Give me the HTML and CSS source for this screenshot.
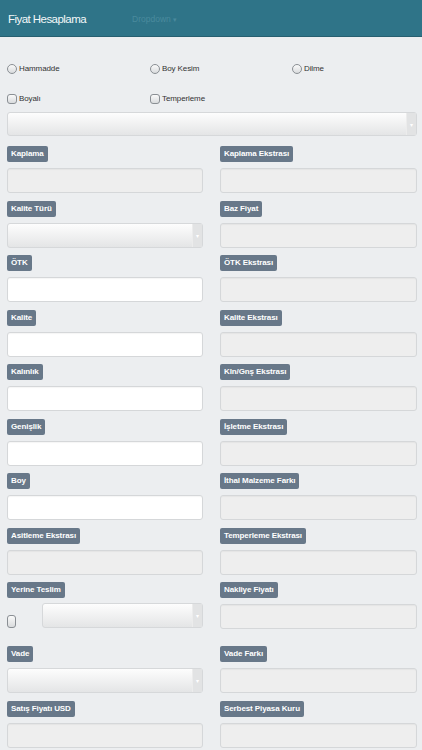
FILE: index.html
```html
<!DOCTYPE html>
<html lang="tr">
<head>
<meta charset="utf-8">
<title>Fiyat Hesaplama</title>
<link rel="stylesheet" href="styles.css">
</head>
<body>
<header class="topbar">
  <span class="brand">Fiyat Hesaplama</span>
  <span class="dropdown">Dropdown <span class="caret">▾</span></span>
</header>
<main class="page">
  <div class="options">
    <label class="opt"><span class="radio"></span>Hammadde</label>
    <label class="opt"><span class="radio"></span>Boy Kesim</label>
    <label class="opt"><span class="radio"></span>Dilme</label>
    <label class="opt opt2"><span class="check"></span>Boyalı</label>
    <label class="opt opt2"><span class="check"></span>Temperleme</label>
  </div>
  <div class="select full"><span class="arrow">▾</span></div>

  <div class="grid">
    <div class="field"><span class="badge">Kaplama</span><div class="input"></div></div>
    <div class="field"><span class="badge">Kaplama Ekstrası</span><div class="input"></div></div>

    <div class="field"><span class="badge">Kalite Türü</span><div class="select"><span class="arrow">▾</span></div></div>
    <div class="field"><span class="badge">Baz Fiyat</span><div class="input"></div></div>

    <div class="field"><span class="badge">ÖTK</span><div class="input white"></div></div>
    <div class="field"><span class="badge">ÖTK Ekstrası</span><div class="input"></div></div>

    <div class="field"><span class="badge">Kalite</span><div class="input white"></div></div>
    <div class="field"><span class="badge">Kalite Ekstrası</span><div class="input"></div></div>

    <div class="field"><span class="badge">Kalınlık</span><div class="input white"></div></div>
    <div class="field"><span class="badge">Kln/Gnş Ekstrası</span><div class="input"></div></div>

    <div class="field"><span class="badge">Genişlik</span><div class="input white"></div></div>
    <div class="field"><span class="badge">İşletme Ekstrası</span><div class="input"></div></div>

    <div class="field"><span class="badge">Boy</span><div class="input white"></div></div>
    <div class="field"><span class="badge">İthal Malzeme Farkı</span><div class="input"></div></div>

    <div class="field"><span class="badge">Asitleme Ekstrası</span><div class="input"></div></div>
    <div class="field"><span class="badge">Temperleme Ekstrası</span><div class="input"></div></div>

    <div class="field tall"><span class="badge">Yerine Teslim</span>
      <div class="teslim"><span class="check tallcheck"></span><div class="select grow"><span class="arrow">▾</span></div></div>
    </div>
    <div class="field tall"><span class="badge">Nakliye Fiyatı</span><div class="input"></div></div>

    <div class="field"><span class="badge">Vade</span><div class="select"><span class="arrow">▾</span></div></div>
    <div class="field"><span class="badge">Vade Farkı</span><div class="input"></div></div>

    <div class="field"><span class="badge">Satış Fiyatı USD</span><div class="input"></div></div>
    <div class="field"><span class="badge">Serbest Piyasa Kuru</span><div class="input"></div></div>
  </div>
</main>
</body>
</html>
```

FILE: styles.css
```css
* { box-sizing: border-box; }
html, body { margin: 0; padding: 0; }
body {
  background: #eceef0;
  font-family: "Liberation Sans", Arial, sans-serif;
  color: #333;
  overflow: hidden;
}
.topbar {
  height: 37px;
  background: #2f7488;
  border-bottom: 1px solid #275f70;
  display: flex;
  align-items: center;
  padding: 2px 0 0 8px;
}
.brand {
  color: #f4f8f9;
  font-size: 11.5px;
  letter-spacing: -0.55px;
  width: 124px;
}
.dropdown {
  color: #4a8a9d;
  font-size: 8.5px;
}
.caret { font-size: 7px; }
.page { padding: 0 5px 0 7px; }
.options {
  display: grid;
  grid-template-columns: 143px 142px 1fr;
  padding-top: 26px;
  row-gap: 19px;
}
.opt {
  display: flex;
  align-items: center;
  font-size: 8px;
  color: #333;
  height: 11px;
  letter-spacing: -0.1px;
}
.radio, .check {
  width: 10px;
  height: 10px;
  border: 1px solid #8a8f94;
  border-radius: 50%;
  background: linear-gradient(#fafafa, #d9dbdd);
  margin-right: 2px;
  flex: none;
}
.check { border-radius: 3px; height: 10px; }
.select {
  height: 25px;
  border: 1px solid #d6d8da;
  border-radius: 3px;
  background: linear-gradient(#fdfdfd, #e4e5e6);
  position: relative;
}
.select.full { margin-top: 8px; height: 24px; }
.arrow {
  position: absolute;
  right: 0;
  top: 0;
  bottom: 0;
  width: 10px;
  background: #e2e3e4;
  border-left: 1px solid #ececec;
  color: #fff;
  font-size: 6px;
  display: flex;
  align-items: center;
  justify-content: center;
}
.grid {
  display: grid;
  grid-template-columns: 196px 197px;
  column-gap: 17px;
  row-gap: 7.5px;
  padding-top: 10px;
}
.field { display: flex; flex-direction: column; align-items: flex-start; }
.badge {
  background: #687889;
  color: #fff;
  font-weight: bold;
  font-size: 8px;
  height: 16px;
  line-height: 16px;
  padding: 0 4px;
  border-radius: 2px;
  letter-spacing: -0.1px;
  white-space: nowrap;
}
.input {
  align-self: stretch;
  margin-top: 6px;
  height: 25px;
  border: 1px solid #d5d7d9;
  border-radius: 3px;
  background: #eeeeee;
  box-shadow: inset 0 1px 1px rgba(0,0,0,0.04);
}
.input.white { background: #fff; }
.field > .select { align-self: stretch; margin-top: 6px; }
.tall { padding-bottom: 9.5px; }
.teslim {
  align-self: stretch;
  display: flex;
  align-items: center;
  margin-top: 5px;
  height: 25px;
}
.tallcheck {
  width: 9px;
  height: 13px;
  border-radius: 3px;
  margin: 12px 26px 0 0;
}
.grow { flex: 1; }
```
